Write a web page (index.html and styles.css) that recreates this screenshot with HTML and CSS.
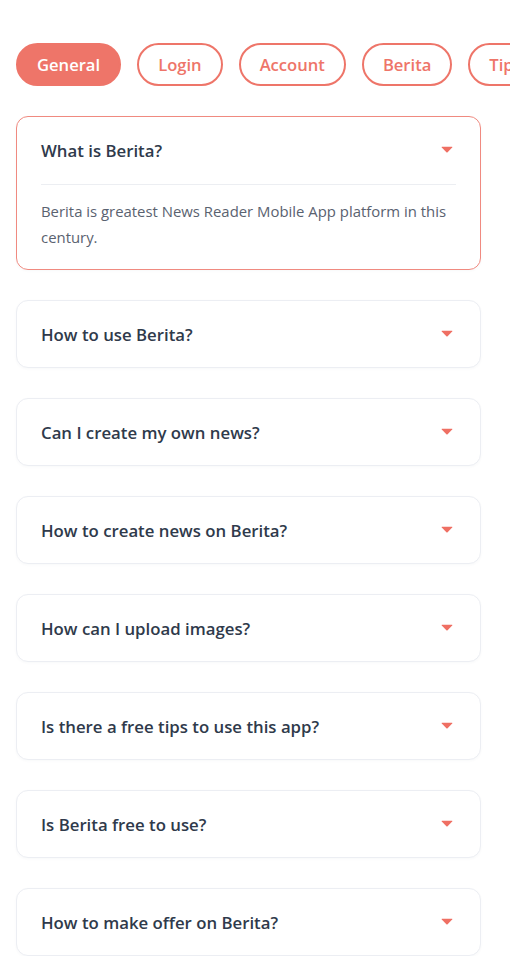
FILE: index.html
```html
<!DOCTYPE html>
<html lang="en">
<head>
<meta charset="utf-8">
<title>FAQ - Berita</title>
<link rel="stylesheet" href="styles.css">
</head>
<body>
<div class="page">
  <nav class="chips">
    <button class="chip active">General</button>
    <button class="chip">Login</button>
    <button class="chip">Account</button>
    <button class="chip">Berita</button>
    <button class="chip">Tips</button>
  </nav>
  <div class="faq-list">
    <div class="card open">
      <div class="card-head">
        <span class="q">What is Berita?</span>
        <svg class="caret" width="12" height="7" viewBox="0 0 12 7"><path d="M1 0.8 H11 Q11.8 0.8 11.2 1.5 L6.6 6.2 Q6 6.8 5.4 6.2 L0.8 1.5 Q0.2 0.8 1 0.8 Z" fill="#ef6f63"/></svg>
      </div>
      <div class="card-body">Berita is greatest News Reader Mobile App platform in this century.</div>
    </div>
    <div class="card"><div class="card-head"><span class="q">How to use Berita?</span><svg class="caret" width="12" height="7" viewBox="0 0 12 7"><path d="M1 0.8 H11 Q11.8 0.8 11.2 1.5 L6.6 6.2 Q6 6.8 5.4 6.2 L0.8 1.5 Q0.2 0.8 1 0.8 Z" fill="#ef6f63"/></svg></div></div>
    <div class="card"><div class="card-head"><span class="q">Can I create my own news?</span><svg class="caret" width="12" height="7" viewBox="0 0 12 7"><path d="M1 0.8 H11 Q11.8 0.8 11.2 1.5 L6.6 6.2 Q6 6.8 5.4 6.2 L0.8 1.5 Q0.2 0.8 1 0.8 Z" fill="#ef6f63"/></svg></div></div>
    <div class="card"><div class="card-head"><span class="q">How to create news on Berita?</span><svg class="caret" width="12" height="7" viewBox="0 0 12 7"><path d="M1 0.8 H11 Q11.8 0.8 11.2 1.5 L6.6 6.2 Q6 6.8 5.4 6.2 L0.8 1.5 Q0.2 0.8 1 0.8 Z" fill="#ef6f63"/></svg></div></div>
    <div class="card"><div class="card-head"><span class="q">How can I upload images?</span><svg class="caret" width="12" height="7" viewBox="0 0 12 7"><path d="M1 0.8 H11 Q11.8 0.8 11.2 1.5 L6.6 6.2 Q6 6.8 5.4 6.2 L0.8 1.5 Q0.2 0.8 1 0.8 Z" fill="#ef6f63"/></svg></div></div>
    <div class="card"><div class="card-head"><span class="q">Is there a free tips to use this app?</span><svg class="caret" width="12" height="7" viewBox="0 0 12 7"><path d="M1 0.8 H11 Q11.8 0.8 11.2 1.5 L6.6 6.2 Q6 6.8 5.4 6.2 L0.8 1.5 Q0.2 0.8 1 0.8 Z" fill="#ef6f63"/></svg></div></div>
    <div class="card"><div class="card-head"><span class="q">Is Berita free to use?</span><svg class="caret" width="12" height="7" viewBox="0 0 12 7"><path d="M1 0.8 H11 Q11.8 0.8 11.2 1.5 L6.6 6.2 Q6 6.8 5.4 6.2 L0.8 1.5 Q0.2 0.8 1 0.8 Z" fill="#ef6f63"/></svg></div></div>
    <div class="card"><div class="card-head"><span class="q">How to make offer on Berita?</span><svg class="caret" width="12" height="7" viewBox="0 0 12 7"><path d="M1 0.8 H11 Q11.8 0.8 11.2 1.5 L6.6 6.2 Q6 6.8 5.4 6.2 L0.8 1.5 Q0.2 0.8 1 0.8 Z" fill="#ef6f63"/></svg></div></div>
  </div>
</div>
</body>
</html>
```
FILE: styles.css
```css
* { box-sizing: border-box; }
html, body { margin: 0; padding: 0; background: #ffffff; }
body {
  font-family: "Open Sans", "Noto Sans", sans-serif;
  color: #2f3a4b;
  overflow: hidden;
}
.page {
  padding: 43px 0 0 16px;
}
.chips {
  display: flex;
  gap: 16px;
  overflow: hidden;
  white-space: nowrap;
}
.chip {
  flex-shrink: 0;
  height: 43px;
  padding: 0 19px;
  border: 2px solid #ee7569;
  border-radius: 22px;
  background: #ffffff;
  color: #ee7569;
  font-family: "Open Sans", "Noto Sans", sans-serif;
  font-size: 16.6px;
  font-weight: 600;
  line-height: 39px;
}
.chip.active {
  background: #ee7569;
  color: #ffffff;
}
.faq-list {
  width: 465px;
  margin-top: 30px;
  display: flex;
  flex-direction: column;
  gap: 30px;
}
.card {
  border: 1px solid #eceef3;
  border-radius: 12px;
  background: #ffffff;
  box-shadow: 0 1px 3px rgba(40, 50, 80, 0.03);
}
.card.open {
  border-color: #f08a80;
}
.card-head {
  height: 66px;
  display: flex;
  align-items: center;
  justify-content: space-between;
  padding: 0 27px 0 24px;
}
.q {
  font-size: 16.8px;
  font-weight: 600;
  color: #2f3a4b;
}
.caret { display: block; margin-top: -2px; }
.card.open .card-head {
  height: 68px;
  margin: 0 24px;
  padding: 0 3px 0 0;
  border-bottom: 1px solid #eceef2;
}
.card-body {
  padding: 13px 24px 19px;
  font-size: 14.9px;
  line-height: 26px;
  color: #5a6270;
}
```
